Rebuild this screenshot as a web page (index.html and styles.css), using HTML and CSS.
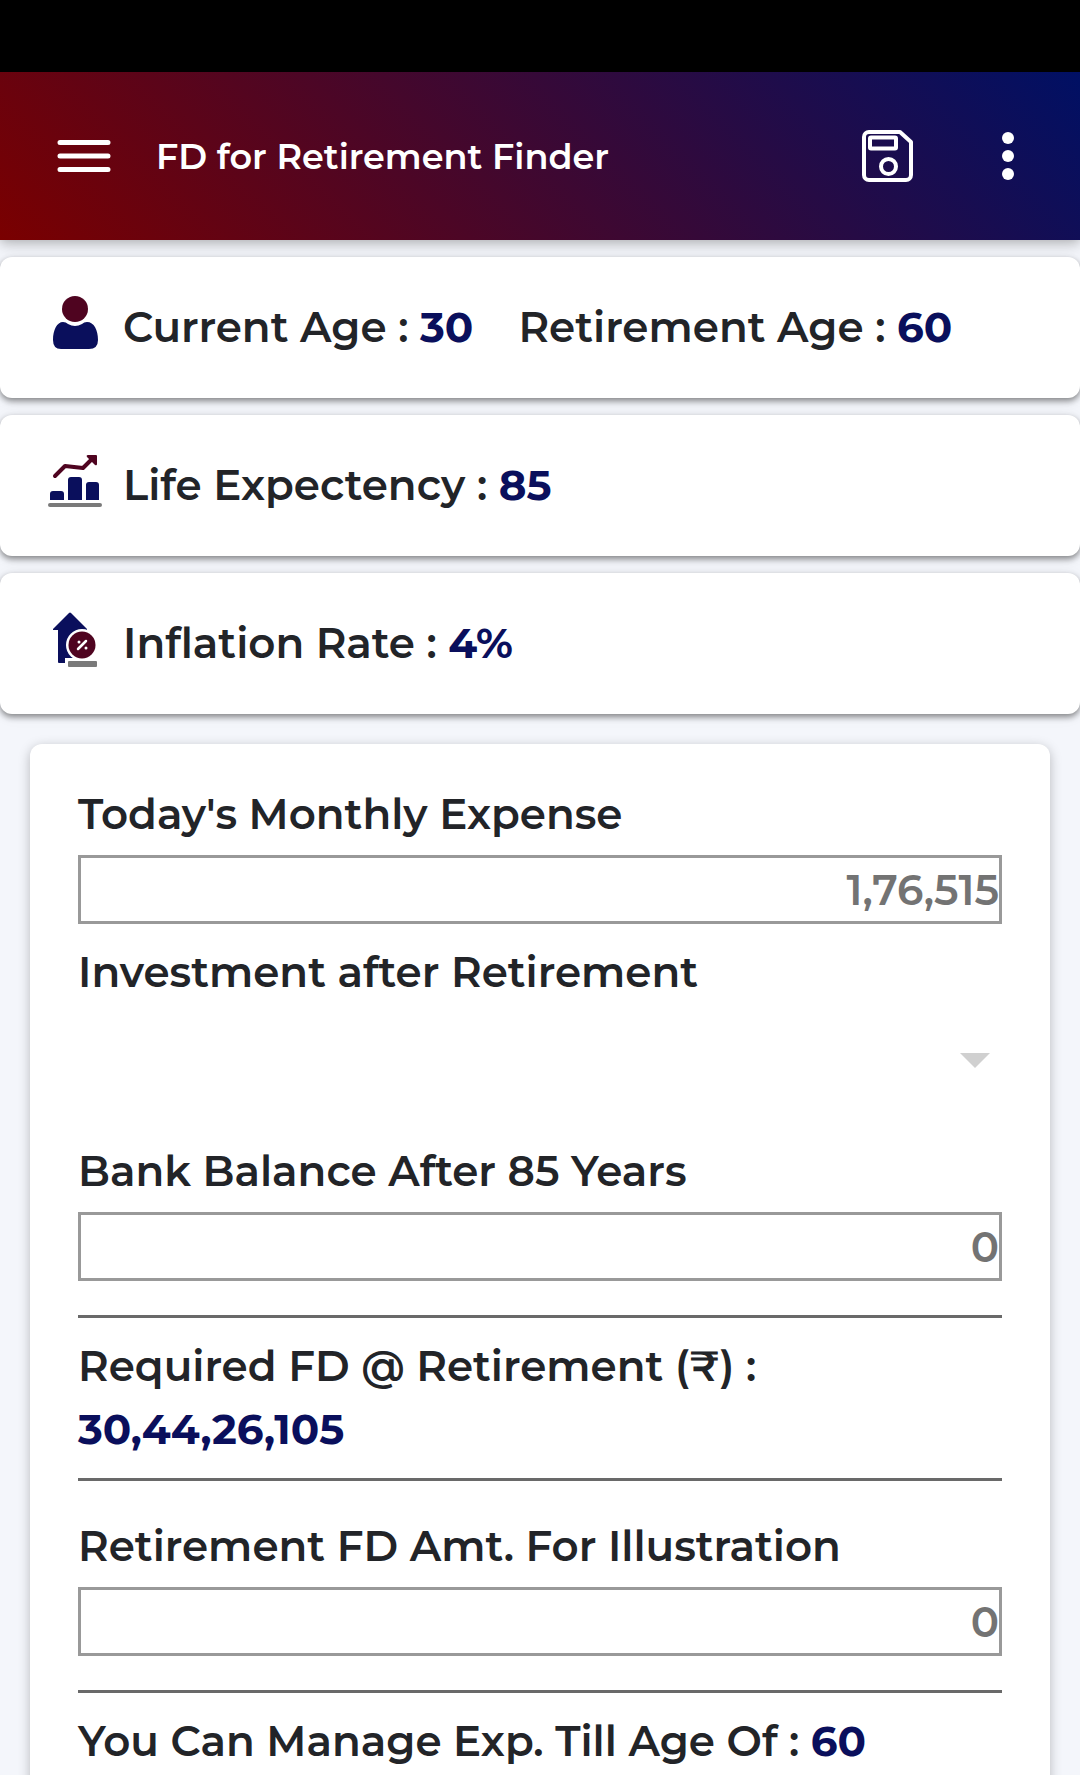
FILE: index.html
```html
<!DOCTYPE html>
<html lang="en">
<head>
  <meta charset="UTF-8">
  <meta name="viewport" content="width=device-width, initial-scale=1.0">
  <title>FD for Retirement Finder</title>
  <link rel="stylesheet" href="styles.css">
</head>
<body>
  <div class="status-bar"></div>
  <header class="toolbar">
    <button class="icon-btn" type="button" aria-label="Menu">
      <svg width="60" height="60" viewBox="0 0 60 60" fill="none" stroke="#fff" stroke-width="5" stroke-linecap="round">
        <path d="M6 16.500h48M6 30h48M6 43.500h48"/>
      </svg>
    </button>
    <h1>FD for Retirement Finder</h1>
    <button class="icon-btn" type="button" aria-label="Save">
      <svg width="60" height="60" viewBox="0 0 60 60" fill="none" stroke="#fff" stroke-width="4" stroke-linejoin="round">
        <path d="M10 6h31l11 10v33a5 5 0 0 1-5 5H10a5 5 0 0 1-5-5V11a5 5 0 0 1 5-5z"/>
        <rect x="11" y="11.500" width="26" height="11" rx="1"/>
        <circle cx="29.500" cy="40.500" r="7.500"/>
      </svg>
    </button>
    <button class="icon-btn" type="button" aria-label="More options">
      <svg width="60" height="60" viewBox="0 0 60 60" fill="#fff">
        <circle cx="30" cy="12" r="6"/><circle cx="30" cy="30" r="6"/><circle cx="30" cy="48" r="6"/>
      </svg>
    </button>
  </header>

  <main>
    <section class="info-card">
      <svg width="60" height="60" viewBox="0 0 60 60">
        <circle cx="30" cy="15" r="13" fill="#4f0420"/>
        <path d="M18 28q3 0 5 2 7 4 14 0 2-2 5-2c7 0 11 8 11 18q0 9-9 9H16q-8 0-8-9c0-10 4-18 10-18z" fill="#0a0f5c"/>
      </svg>
      <p>Current Age : <b>30</b></p>
      <p>Retirement Age : <b>60</b></p>
    </section>
    <section class="info-card">
      <svg width="60" height="60" viewBox="0 0 60 60">
        <path d="M10 24 20 14l18 2 9-9" fill="none" stroke="#4f0420" stroke-width="4" stroke-linecap="round" stroke-linejoin="round"/>
        <path d="M43 3h8q1 0 1 1v8q0 2-2 1l-8-8q-1-2 1-2z" fill="#4f0420"/>
        <path d="M5 48v-6q0-3 3-3h8q3 0 3 3v6zM23 48V28q0-3 3-3h8q3 0 3 3v20zM41 48V33q0-3 3-3h7q3 0 3 3v15z" fill="#0a0f5c"/>
        <rect x="3" y="51" width="54" height="4" rx="2" fill="#7a7a7a"/>
      </svg>
      <p>Life Expectency : <b>85</b></p>
    </section>
    <section class="info-card">
      <svg width="60" height="60" viewBox="0 0 60 60">
        <path d="M8 19 24 3q1-1 2 0l16 16v2h-4v30h-6v2H14q-1 0-1-1V20H8z" fill="#0a0f5c"/>
        <circle cx="37" cy="35" r="16" fill="#fff"/>
        <path d="M20 48h34v10H20z" fill="#fff"/>
        <circle cx="37" cy="35" r="13.500" fill="#4f0420"/>
        <path d="m33 39 8-8" stroke="#fff" stroke-width="2.500" stroke-linecap="round"/>
        <circle cx="34" cy="32" r="1.500" fill="#fff"/><circle cx="41" cy="38" r="1.500" fill="#fff"/>
        <rect x="23" y="51" width="29" height="6" rx="1" fill="#7a7a7a"/>
      </svg>
      <p>Inflation Rate : <b>4%</b></p>
    </section>

    <form class="form-card">
      <div class="field">
        <label for="expense">Today's Monthly Expense</label>
        <input id="expense" type="text" inputmode="numeric" placeholder="1,76,515">
      </div>
      <div class="field">
        <label for="investment">Investment after Retirement</label>
        <div class="select-wrap">
          <select id="investment"><option value=""></option></select>
        </div>
      </div>
      <div class="field">
        <label for="balance">Bank Balance After 85 Years</label>
        <input id="balance" type="text" inputmode="numeric" placeholder="0">
      </div>
      <div class="result">
        <p>Required FD @ Retirement (₹) :</p>
        <p><b>30,44,26,105</b></p>
      </div>
      <div class="field illustration">
        <label for="amount">Retirement FD Amt. For Illustration</label>
        <input id="amount" type="text" inputmode="numeric" placeholder="0">
      </div>
      <div class="result">
        <p>You Can Manage Exp. Till Age Of : <b>60</b></p>
      </div>
    </form>
  </main>
</body>
</html>
```
FILE: styles.css
```css
:root {
  --navy: #0a0f5c;
  --text: #222428;
  --background: #f4f6fb;
  --border: #999;
  --rule: #696969;
}
* { box-sizing: border-box; }
body {
  margin: 0;
  height: 100vh;
  display: flex;
  flex-direction: column;
  overflow: hidden;
  background: var(--background);
  color: var(--text);
  font-family: Montserrat, Inter, sans-serif;
  font-size: 42px;
  font-weight: 600;
  line-height: 63px;
}
p { margin: 0; }
b { color: var(--navy); font-weight: 700; }

/* Header */
.status-bar { flex: none; height: 72px; background: #000; }
.toolbar {
  flex: none;
  position: relative;
  display: flex;
  align-items: center;
  height: 168px;
  padding: 0 42px 0 54px;
  background: linear-gradient(45deg, #7a0000, #001064);
  box-shadow: 0 3px 12px rgba(0,0,0,0.3);
}
.toolbar h1 {
  flex: 1;
  margin: 0 0 0 42px;
  color: #fff;
  font-size: 35px;
  font-weight: 600;
}
.icon-btn { padding: 0; border: none; background: none; cursor: pointer; }
.icon-btn + .icon-btn { margin-left: 59px; }
svg { display: block; flex: none; }

/* Scrolling content */
main { flex: 1; min-height: 0; overflow-y: auto; scrollbar-width: none; padding-top: 17px; }
.info-card {
  display: flex;
  align-items: center;
  height: 141px;
  margin-bottom: 17px;
  padding: 0 45px;
  background: #fff;
  border-radius: 12px;
  box-shadow: 0 3px 6px rgba(0,0,0,0.45), 0 0 20px rgba(0,0,0,0.05);
}
.info-card svg { margin-bottom: 8px; }
.info-card p { margin-left: 18px; }
.info-card p + p { margin-left: 45px; }

.form-card {
  margin: 30px;
  padding: 39px 48px;
  background: #fff;
  border-radius: 12px;
  box-shadow: 0 3px 12px rgba(0,0,0,0.25);
}
.field { margin-bottom: 17px; }
label { display: block; margin-bottom: 9px; }
input, select {
  display: block;
  width: 100%;
  padding: 0;
  background: #fff;
  font: inherit;
  border-radius: 0;
}
input {
  height: 69px;
  border: 3px solid var(--border);
  text-align: right;
}
input::placeholder { color: #737373; opacity: 1; }
.select-wrap { position: relative; padding-bottom: 14px; }
.select-wrap::after {
  content: "";
  position: absolute;
  top: 40px;
  right: 12px;
  border: 15px solid transparent;
  border-top-color: #d0d0d0;
  border-bottom: none;
  pointer-events: none;
}
select { height: 96px; border: none; appearance: none; }

.result {
  margin-top: 34px;
  padding: 17px 0;
  border-top: 3px solid var(--rule);
}
.illustration { padding-top: 34px; border-top: 3px solid var(--rule); }
```
